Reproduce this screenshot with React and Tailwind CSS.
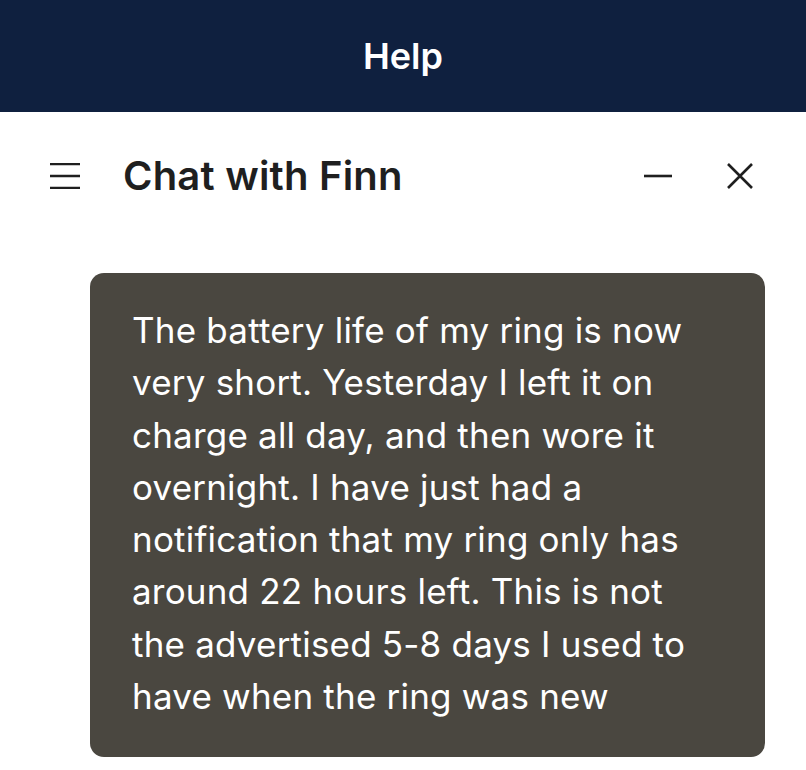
export default function App() {
  return (
    <div className="min-h-screen w-[806px] bg-white font-['Inter',sans-serif]">
      <header className="flex h-[112px] items-center justify-center bg-[#0f203f]">
        <h1 className="text-[36px] font-semibold text-white">Help</h1>
      </header>

      <div className="flex h-[130px] items-center px-[50px] pb-[2px]">
        <svg width="30" height="26" viewBox="0 0 30 26" className="text-[#1f1f1f]">
          <path d="M0 1h30M0 13h30M0 25h30" stroke="currentColor" strokeWidth="2.4" />
        </svg>
        <h2 className="ml-[43px] text-[40px] font-semibold tracking-[0.2px] text-[#1f1f1f]">Chat with Finn</h2>
        <div className="ml-auto flex items-center gap-[55px] pr-[3px]">
          <svg width="28" height="4" viewBox="0 0 28 4">
            <path d="M0 2h28" stroke="#1f1f1f" strokeWidth="2.6" />
          </svg>
          <svg width="26" height="26" viewBox="0 0 26 26">
            <path d="M1 1l24 24M25 1L1 25" stroke="#1f1f1f" strokeWidth="2.6" />
          </svg>
        </div>
      </div>

      <div className="pl-[90px] pr-[41px] pt-[31px]">
        <div className="rounded-[14px] bg-[#4a4740] pb-[35px] pl-[42px] pr-[58px] pt-[31px]">
          <p className="text-[35px] leading-[52.3px] tracking-[0.2px] text-white">
            The battery life of my ring is now very short. Yesterday I left it on charge all day, and then wore it overnight. I have just had a notification that my ring only has around 22 hours left. This is not the advertised 5-8 days I used to have when the ring was new
          </p>
        </div>
      </div>
    </div>
  );
}
